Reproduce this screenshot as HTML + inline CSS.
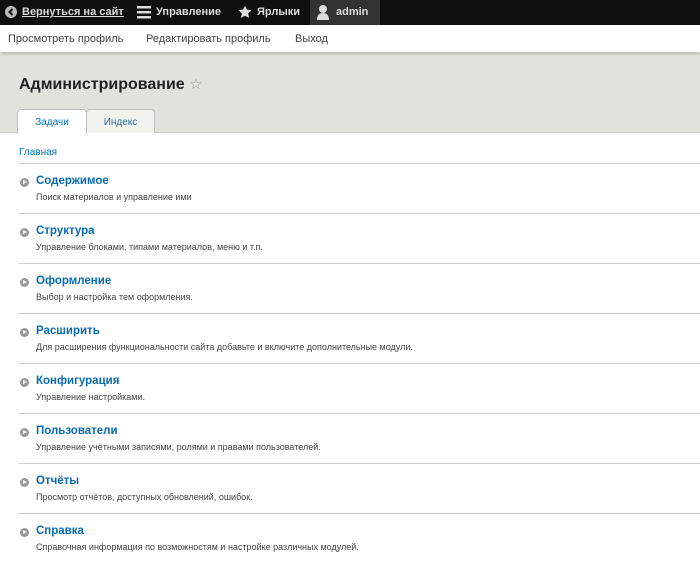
<!DOCTYPE html>
<html><head><meta charset="utf-8"><style>
*{margin:0;padding:0;box-sizing:border-box}
body{width:700px;height:570px;overflow:hidden;background:#fff;font-family:"Liberation Sans","DejaVu Sans",sans-serif;position:relative}
.tb{position:absolute;left:0;top:0;width:700px;height:25px;background:#0f0f0f;color:#ddd;font-size:11px;font-weight:bold}
.tb span{position:absolute;top:6px;white-space:nowrap}
.adm{position:absolute;left:310px;top:0;width:70px;height:25px;background:#333}
.sub{position:absolute;left:0;top:25px;width:700px;height:27px;background:#fff;box-shadow:0 1px 3px rgba(0,0,0,.35);font-size:11px;color:#444;z-index:2}
.sub span{position:absolute;top:8px}
.hd{position:absolute;left:0;top:53px;width:700px;height:80px;background:#e1e2dc;border-bottom:1px solid #c9cac4}
h1{position:absolute;left:19px;top:75px;font-size:16px;color:#222;font-weight:bold}
.tab{position:absolute;top:109px;height:24px;border:1px solid #bfbfba;border-bottom:none;border-radius:4px 4px 0 0;font-size:10px;text-align:center;padding-top:7px;color:#0074bd}
.t1{left:17px;width:70px;background:#fff;height:25px;z-index:3}
.t2{left:86px;width:69px;background:#f2f2ef;color:#2a6f99}
.bc{position:absolute;left:19px;top:147px;font-size:10px;color:#0074bd}
.it{position:absolute;left:19px;width:681px;height:50px;border-top:1px solid #ccc}
.it .ic{position:absolute;left:1px;top:14px;width:9px;height:9px;border-radius:50%;background:#999}
.it .ic:after{content:"";position:absolute;left:3px;top:2px;border-left:4px solid #fff;border-top:2.5px solid transparent;border-bottom:2.5px solid transparent}
.it b{position:absolute;left:17px;top:11px;font-size:11.5px;color:#0a6cb0}
.it i{position:absolute;left:17px;top:28px;font-size:9px;color:#444;font-style:normal;white-space:nowrap}
</style></head><body>
<div class="tb">
<svg style="position:absolute;left:5px;top:6px" width="12" height="12"><circle cx="6" cy="6" r="6" fill="#bbb"/><path d="M7.5 3 L4.5 6 L7.5 9" stroke="#111" stroke-width="2" fill="none"/></svg>
<span style="left:22px;text-decoration:underline">Вернуться на сайт</span>
<svg style="position:absolute;left:137px;top:6px" width="14" height="13"><rect y="0" width="14" height="2.5" fill="#ddd"/><rect y="5" width="14" height="2.5" fill="#ddd"/><rect y="10" width="14" height="2.5" fill="#ddd"/></svg>
<span style="left:156px">Управление</span>
<svg style="position:absolute;left:238px;top:5px" width="14" height="14" viewBox="0 0 24 24"><path d="M12 1l3.4 7 7.6 1-5.5 5.3 1.3 7.7L12 18.4 5.2 22l1.3-7.7L1 9l7.6-1z" fill="#ddd"/></svg>
<span style="left:257px">Ярлыки</span>
<div class="adm"></div>
<svg style="position:absolute;left:317px;top:4px" width="12" height="16"><circle cx="6" cy="5" r="4" fill="#ddd"/><path d="M0 16 Q0 9 6 9 Q12 9 12 16z" fill="#ddd"/></svg>
<span style="left:336px">admin</span>
</div>
<div class="sub"><span style="left:8px">Просмотреть профиль</span><span style="left:146px">Редактировать профиль</span><span style="left:295px">Выход</span></div>
<div class="hd"></div>
<h1>Администрирование <span style="color:#999;font-weight:normal;font-size:15px">☆</span></h1>
<div class="tab t1">Задачи</div><div class="tab t2">Индекс</div>
<div class="bc">Главная</div>
<div class="it" style="top:163px"><div class="ic"></div><b>Содержимое</b><i>Поиск материалов и управление ими</i></div>
<div class="it" style="top:213px"><div class="ic"></div><b>Структура</b><i>Управление блоками, типами материалов, меню и т.п.</i></div>
<div class="it" style="top:263px"><div class="ic"></div><b>Оформление</b><i>Выбор и настройка тем оформления.</i></div>
<div class="it" style="top:313px"><div class="ic"></div><b>Расширить</b><i>Для расширения функциональности сайта добавьте и включите дополнительные модули.</i></div>
<div class="it" style="top:363px"><div class="ic"></div><b>Конфигурация</b><i>Управление настройками.</i></div>
<div class="it" style="top:413px"><div class="ic"></div><b>Пользователи</b><i>Управление учётными записями, ролями и правами пользователей.</i></div>
<div class="it" style="top:463px"><div class="ic"></div><b>Отчёты</b><i>Просмотр отчётов, доступных обновлений, ошибок.</i></div>
<div class="it" style="top:513px"><div class="ic"></div><b>Справка</b><i>Справочная информация по возможностям и настройке различных модулей.</i></div>
</body></html>
